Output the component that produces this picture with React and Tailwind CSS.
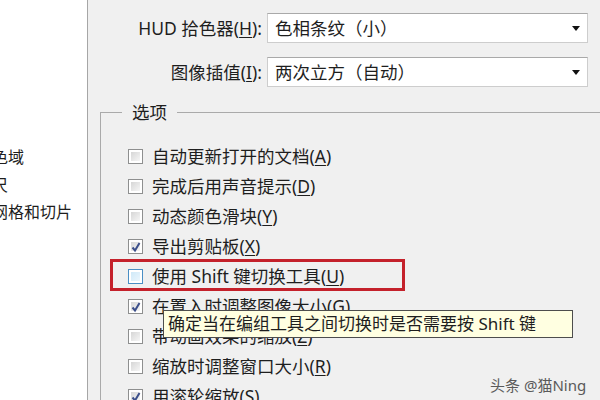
import React from "react";

const sideItems = ["透明度与色域", "单位与标尺", "参考线、网格和切片"];

const options = [
  { text: "自动更新打开的文档", key: "A", checked: false },
  { text: "完成后用声音提示", key: "D", checked: false },
  { text: "动态颜色滑块", key: "Y", checked: false },
  { text: "导出剪贴板", key: "X", checked: true },
  { text: "使用 Shift 键切换工具", key: "U", checked: false, hover: true },
  { text: "在置入时调整图像大小", key: "G", checked: true },
  { text: "带动画效果的缩放", key: "Z", checked: false },
  { text: "缩放时调整窗口大小", key: "R", checked: false },
  { text: "用滚轮缩放", key: "S", checked: true },
];

function Checkbox({ checked, hover }) {
  if (hover) {
    return (
      <span className="w-[15px] h-[15px] shrink-0 border border-[#4a8ec4] bg-white p-[2px] flex">
        <span className="flex-1 bg-[linear-gradient(135deg,#cfe9f8,#eaf6fd)]" />
      </span>
    );
  }
  return (
    <span className="w-[15px] h-[15px] shrink-0 border border-[#8e8f8f] bg-white p-[2px] flex relative">
      <span className="flex-1 bg-[linear-gradient(135deg,#d6d6d6,#f6f6f6)]" />
      {checked && (
        <svg className="absolute left-[1px] top-[1px]" width="12" height="12" viewBox="0 0 12 12">
          <path d="M2.5 6.5 L5 9.5 L9.5 2" fill="none" stroke="#3c4f8a" strokeWidth="2" />
        </svg>
      )}
    </span>
  );
}

function Select({ label, k, value }) {
  return (
    <div className="flex items-center h-[30px]">
      <div className="w-[174px] text-right whitespace-nowrap">
        {label}(<span className="underline underline-offset-2">{k}</span>):
      </div>
      <div className="ml-[5px] w-[321px] h-full bg-white border border-[#cdcdcd] border-t-[#a9a9a9] flex items-center pl-[7px] pr-[7px]">
        <span className="flex-1 whitespace-nowrap">{value}</span>
        <svg width="8" height="5" viewBox="0 0 8 5">
          <path d="M0 0 H8 L4 5 Z" fill="#111" />
        </svg>
      </div>
    </div>
  );
}

export default function App() {
  return (
    <div className="w-[600px] h-[400px] relative overflow-hidden flex bg-[#f0f0f0] text-[#1e1e1e] text-[17.5px] leading-[22px] font-['Noto_Sans','Noto_Sans_CJK_SC',sans-serif]">
      {/* Category list */}
      <aside className="w-[88px] shrink-0 bg-white border-r border-[#a6a6a6] pt-[144px] overflow-hidden">
        <div className="ml-[-72px] whitespace-nowrap text-[16px] leading-[27.5px]">
          {sideItems.map(t => (
            <div key={t}>{t}</div>
          ))}
        </div>
      </aside>

      <main className="flex-1 pt-[13px]">
        <Select label="HUD 拾色器" k="H" value="色相条纹（小）" />
        <div className="h-[14px]" />
        <Select label="图像插值" k="I" value="两次立方（自动）" />

        {/* Options group */}
        <div className="ml-[12px] mt-[25px] border-t border-l border-[#aaaaaa]">
          <div className="ml-[21px] mt-[-12px] px-[10px] w-fit bg-[#f0f0f0]">选项</div>
          <div className="pl-[27px] pt-[18px]">
            {options.map(o => (
              <div key={o.key} className="h-[30px] flex items-center gap-[9px] whitespace-nowrap">
                <Checkbox checked={o.checked} hover={o.hover} />
                <span>
                  {o.text}(<span className="underline underline-offset-2">{o.key}</span>)
                </span>
              </div>
            ))}
          </div>
        </div>
      </main>

      {/* Highlight */}
      <div className="absolute left-[110px] top-[259px] w-[295px] h-[32px] border-[3px] border-[#c4212b]" />

      {/* Tooltip */}
      <div className="absolute left-[163px] top-[310px] w-[410px] h-[28px] bg-[#ffffe1] border border-[#4d4d4d] pl-[4px] text-[17px] leading-[26px] whitespace-nowrap">
        确定当在编组工具之间切换时是否需要按 Shift 键
      </div>

      {/* Watermark */}
      <div className="absolute left-[490px] top-[375px] text-[15px] leading-[20px] text-[#5a5a5a] whitespace-nowrap">
        头条 @猫Ning
      </div>
    </div>
  );
}
